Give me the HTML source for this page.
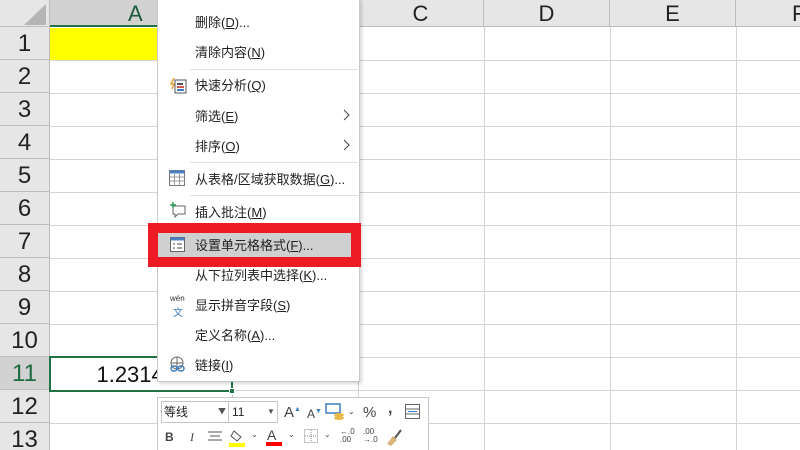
<!DOCTYPE html>
<html><head><meta charset="utf-8"><style>
*{margin:0;padding:0;box-sizing:border-box}
html,body{width:800px;height:450px;overflow:hidden}
body{background:#fff;position:relative;font-family:"Liberation Sans","Noto Sans CJK SC",sans-serif}
.a{position:absolute}
.hl{position:absolute;background:#d4d4d4}
.rh{position:absolute;left:0;width:50px;height:33px;background:#e6e6e6;border-bottom:1px solid #bdbdbd;border-right:1px solid #bdbdbd;font-size:24px;color:#222;text-align:center;line-height:33px}
.ch{position:absolute;top:0;height:27px;background:#e6e6e6;border-right:1px solid #bdbdbd;border-bottom:1px solid #bdbdbd;font-size:22px;color:#222;text-align:center;line-height:28px}
.mi{position:absolute;left:195px;font-size:13px;color:#222;font-family:"Liberation Sans","Noto Sans CJK SC",sans-serif}
.sep{position:absolute;left:190px;width:168px;height:1px;background:#e1e1e1}
.arr{position:absolute;left:343px}
</style></head><body>
<div class="ch" style="left:0;width:50px"></div>
<svg class="a" style="left:20px;top:2px" width="28" height="24"><polygon points="26,2 26,23 4,23" fill="#b5b5b5"/></svg>
<div class="ch" style="left:50px;width:182px;background:#d2d2d2;border-bottom:2px solid #217346;text-align:left;padding-left:78px;color:#1e5b3a">A</div>
<div class="ch" style="left:232px;width:126px"></div>
<div class="ch" style="left:358px;width:126px">C</div>
<div class="ch" style="left:484px;width:126px">D</div>
<div class="ch" style="left:610px;width:126px">E</div>
<div class="ch" style="left:736px;width:126px;text-align:left;padding-left:56px">F</div>
<div class="rh" style="top:27px">1</div>
<div class="rh" style="top:60px">2</div>
<div class="rh" style="top:93px">3</div>
<div class="rh" style="top:126px">4</div>
<div class="rh" style="top:159px">5</div>
<div class="rh" style="top:192px">6</div>
<div class="rh" style="top:225px">7</div>
<div class="rh" style="top:258px">8</div>
<div class="rh" style="top:291px">9</div>
<div class="rh" style="top:324px">10</div>
<div class="rh" style="top:357px;background:#d2d2d2;color:#1e6b40">11</div>
<div class="rh" style="top:390px">12</div>
<div class="rh" style="top:423px">13</div>
<div class="hl" style="left:50px;top:60px;width:750px;height:1px"></div>
<div class="hl" style="left:50px;top:93px;width:750px;height:1px"></div>
<div class="hl" style="left:50px;top:126px;width:750px;height:1px"></div>
<div class="hl" style="left:50px;top:159px;width:750px;height:1px"></div>
<div class="hl" style="left:50px;top:192px;width:750px;height:1px"></div>
<div class="hl" style="left:50px;top:225px;width:750px;height:1px"></div>
<div class="hl" style="left:50px;top:258px;width:750px;height:1px"></div>
<div class="hl" style="left:50px;top:291px;width:750px;height:1px"></div>
<div class="hl" style="left:50px;top:324px;width:750px;height:1px"></div>
<div class="hl" style="left:50px;top:357px;width:750px;height:1px"></div>
<div class="hl" style="left:50px;top:390px;width:750px;height:1px"></div>
<div class="hl" style="left:50px;top:423px;width:750px;height:1px"></div>
<div class="hl" style="left:232px;top:27px;width:1px;height:423px"></div>
<div class="hl" style="left:358px;top:27px;width:1px;height:423px"></div>
<div class="hl" style="left:484px;top:27px;width:1px;height:423px"></div>
<div class="hl" style="left:610px;top:27px;width:1px;height:423px"></div>
<div class="hl" style="left:736px;top:27px;width:1px;height:423px"></div>
<div class="a" style="left:50px;top:28px;width:182px;height:32px;background:#ffff00"></div>
<div class="a" style="left:50px;top:358px;width:178px;text-align:right;font-size:22px;line-height:33px;color:#111">1.23140E+10</div>
<div class="a" style="left:232px;top:358px;width:122px;text-align:right;font-size:22px;line-height:33px;color:#111">1.23E+10</div>
<div class="a" style="left:49px;top:356px;width:184px;height:36px;border:2px solid #217346"></div>
<div class="a" style="left:229px;top:388px;width:6px;height:6px;background:#217346;border:1px solid #fff"></div>
<div class="a" style="left:157px;top:-2px;width:203px;height:384px;background:#fff;border:1px solid #c8c8c8;box-shadow:2px 2px 3px rgba(0,0,0,.15)"></div>
<div class="mi" style="top:12px">删除(<u>D</u>)...</div>
<div class="mi" style="top:42px">清除内容(<u>N</u>)</div>
<div class="sep" style="top:69px"></div>
<svg class="a" style="left:169px;top:77px" width="18" height="17"><path d="M5 1 L2 7 L5 7 L3 12" stroke="#e8a33a" stroke-width="1.6" fill="none"/><rect x="6" y="3" width="11" height="13" fill="none" stroke="#555"/><rect x="8" y="6" width="6" height="2" fill="#555"/><rect x="8" y="9" width="7" height="2" fill="#d2584d"/><rect x="8" y="12" width="7" height="2" fill="#3d7ec2"/></svg>
<div class="mi" style="top:75px">快速分析(<u>Q</u>)</div>
<div class="mi" style="top:106px">筛选(<u>E</u>)</div>
<svg class="arr" style="top:109px" width="8" height="12"><path d="M1 1L6 6L1 11" fill="none" stroke="#444"/></svg>
<div class="mi" style="top:136px">排序(<u>O</u>)</div>
<svg class="arr" style="top:139px" width="8" height="12"><path d="M1 1L6 6L1 11" fill="none" stroke="#444"/></svg>
<div class="sep" style="top:162px"></div>
<svg class="a" style="left:169px;top:170px" width="17" height="17"><rect x="0.5" y="0.5" width="15" height="15" fill="#fff" stroke="#777"/><rect x="0.5" y="0.5" width="15" height="3" fill="#4a7fc1"/><path d="M1 7H16M1 11H16M5.5 4V16M10.5 4V16" stroke="#999"/></svg>
<div class="mi" style="top:169px">从表格/区域获取数据(<u>G</u>)...</div>
<div class="sep" style="top:195px"></div>
<svg class="a" style="left:169px;top:201px" width="18" height="17"><path d="M4 5H16V13H9L6 16V13H4Z" fill="none" stroke="#666"/><path d="M4 1V7M1 4H7" stroke="#2e9c5a" stroke-width="1.5"/></svg>
<div class="mi" style="top:202px">插入批注(<u>M</u>)</div>
<div class="a" style="left:148px;top:223px;width:213px;height:44px;border:10px solid #ed1c24"></div>
<div class="a" style="left:158px;top:233px;width:193px;height:24px;background:#d0d0d0"></div>
<svg class="a" style="left:170px;top:237px" width="16" height="16"><rect x="0.5" y="0.5" width="14" height="14" fill="#fff" stroke="#666"/><rect x="0.5" y="0.5" width="14" height="3" fill="#4a7fc1"/><path d="M3 7H5M7 7H12M3 11H5M7 11H12" stroke="#444"/></svg>
<div class="mi" style="top:235px">设置单元格格式(<u>F</u>)...</div>
<div class="mi" style="top:265px">从下拉列表中选择(<u>K</u>)...</div>
<div class="a" style="left:170px;top:295px;font-size:8px;color:#333;line-height:8px">wén</div>
<div class="a" style="left:173px;top:304px;font-size:10px;color:#3d7ec2;font-family:'Noto Sans CJK SC',sans-serif">文</div>
<div class="mi" style="top:295px">显示拼音字段(<u>S</u>)</div>
<div class="mi" style="top:325px">定义名称(<u>A</u>)...</div>
<svg class="a" style="left:169px;top:356px" width="18" height="17"><circle cx="8" cy="7" r="6" fill="none" stroke="#666"/><path d="M2 7H14M8 1V13" stroke="#666"/><rect x="2" y="10" width="6" height="5" rx="2.5" fill="none" stroke="#3d7ec2" stroke-width="1.5"/><rect x="9" y="10" width="6" height="5" rx="2.5" fill="none" stroke="#3d7ec2" stroke-width="1.5"/></svg>
<div class="mi" style="top:355px">链接(<u>I</u>)</div>
<div class="a" style="left:157px;top:397px;width:272px;height:60px;background:#fff;border:1px solid #c8c8c8"></div>
<div class="a" style="left:161px;top:401px;width:68px;height:22px;border:1px solid #c6c6c6;font-size:12px;line-height:20px;padding-left:2px;color:#222;font-family:'Noto Sans CJK SC',sans-serif">等线<span style="position:absolute;left:56px;font-size:8px;color:#555">▼</span></div>
<div class="a" style="left:228px;top:401px;width:50px;height:22px;border:1px solid #c6c6c6;font-size:12px;line-height:20px;padding-left:3px;color:#222">11<span style="position:absolute;left:38px;font-size:8px;color:#555">▼</span></div>
<div class="a" style="left:284px;top:404px;font-size:15px;color:#444">A<sup style="font-size:7px;color:#3d7ec2">▲</sup></div>
<div class="a" style="left:307px;top:407px;font-size:12px;color:#444">A<sup style="font-size:7px;color:#3d7ec2">▼</sup></div>
<svg class="a" style="left:325px;top:403px" width="22" height="18"><rect x="1" y="1" width="14" height="9" fill="none" stroke="#3d7ec2" stroke-width="1.5"/><ellipse cx="14" cy="12" rx="5" ry="2" fill="#e8b84a"/><ellipse cx="14" cy="15" rx="5" ry="2" fill="#e8b84a"/></svg>
<div class="a" style="left:348px;top:407px;font-size:8px;color:#444">⌄</div>
<div class="a" style="left:363px;top:404px;font-size:15px;color:#444">%</div>
<div class="a" style="left:388px;top:400px;font-size:16px;color:#444;font-weight:bold">,</div>
<svg class="a" style="left:405px;top:404px" width="16" height="16"><rect x="0.5" y="0.5" width="14" height="14" fill="none" stroke="#666"/><path d="M1 5H15M1 10H15" stroke="#666"/><path d="M3 7.5H12" stroke="#3d7ec2"/></svg>
<div class="a" style="left:165px;top:430px;font-size:12px;font-weight:bold;color:#444">B</div>
<div class="a" style="left:190px;top:430px;font-size:12px;font-style:italic;color:#444;font-family:'Liberation Serif',serif">I</div>
<svg class="a" style="left:207px;top:431px" width="16" height="12"><path d="M1 1H15M3 5H13M1 9H15" stroke="#555"/></svg>
<svg class="a" style="left:229px;top:428px" width="18" height="20"><path d="M5 3L12 9L8 13L2 8Z" fill="none" stroke="#555"/><rect x="0" y="15" width="16" height="4" fill="#ffff00"/></svg>
<div class="a" style="left:251px;top:430px;font-size:8px;color:#444">⌄</div>
<div class="a" style="left:267px;top:427px;font-size:14px;color:#444">A</div>
<div class="a" style="left:266px;top:442px;width:16px;height:4px;background:#ff0000"></div>
<div class="a" style="left:288px;top:430px;font-size:8px;color:#444">⌄</div>
<svg class="a" style="left:304px;top:429px" width="14" height="14"><rect x="0.5" y="0.5" width="13" height="13" fill="none" stroke="#888" stroke-dasharray="1 1"/><path d="M7 1V13M1 7H13" stroke="#888" stroke-dasharray="1 1"/></svg>
<div class="a" style="left:324px;top:430px;font-size:8px;color:#444">⌄</div>
<div class="a" style="left:340px;top:428px;font-size:8px;line-height:8px;color:#444">←.0<br>.00</div>
<div class="a" style="left:363px;top:428px;font-size:8px;line-height:8px;color:#444">.00<br>→.0</div>
<svg class="a" style="left:384px;top:427px" width="20" height="20"><path d="M3 17L9 9L13 13L7 19Z" fill="#d8b47a"/><path d="M11 11L17 3" stroke="#555" stroke-width="2"/></svg>
</body></html>
